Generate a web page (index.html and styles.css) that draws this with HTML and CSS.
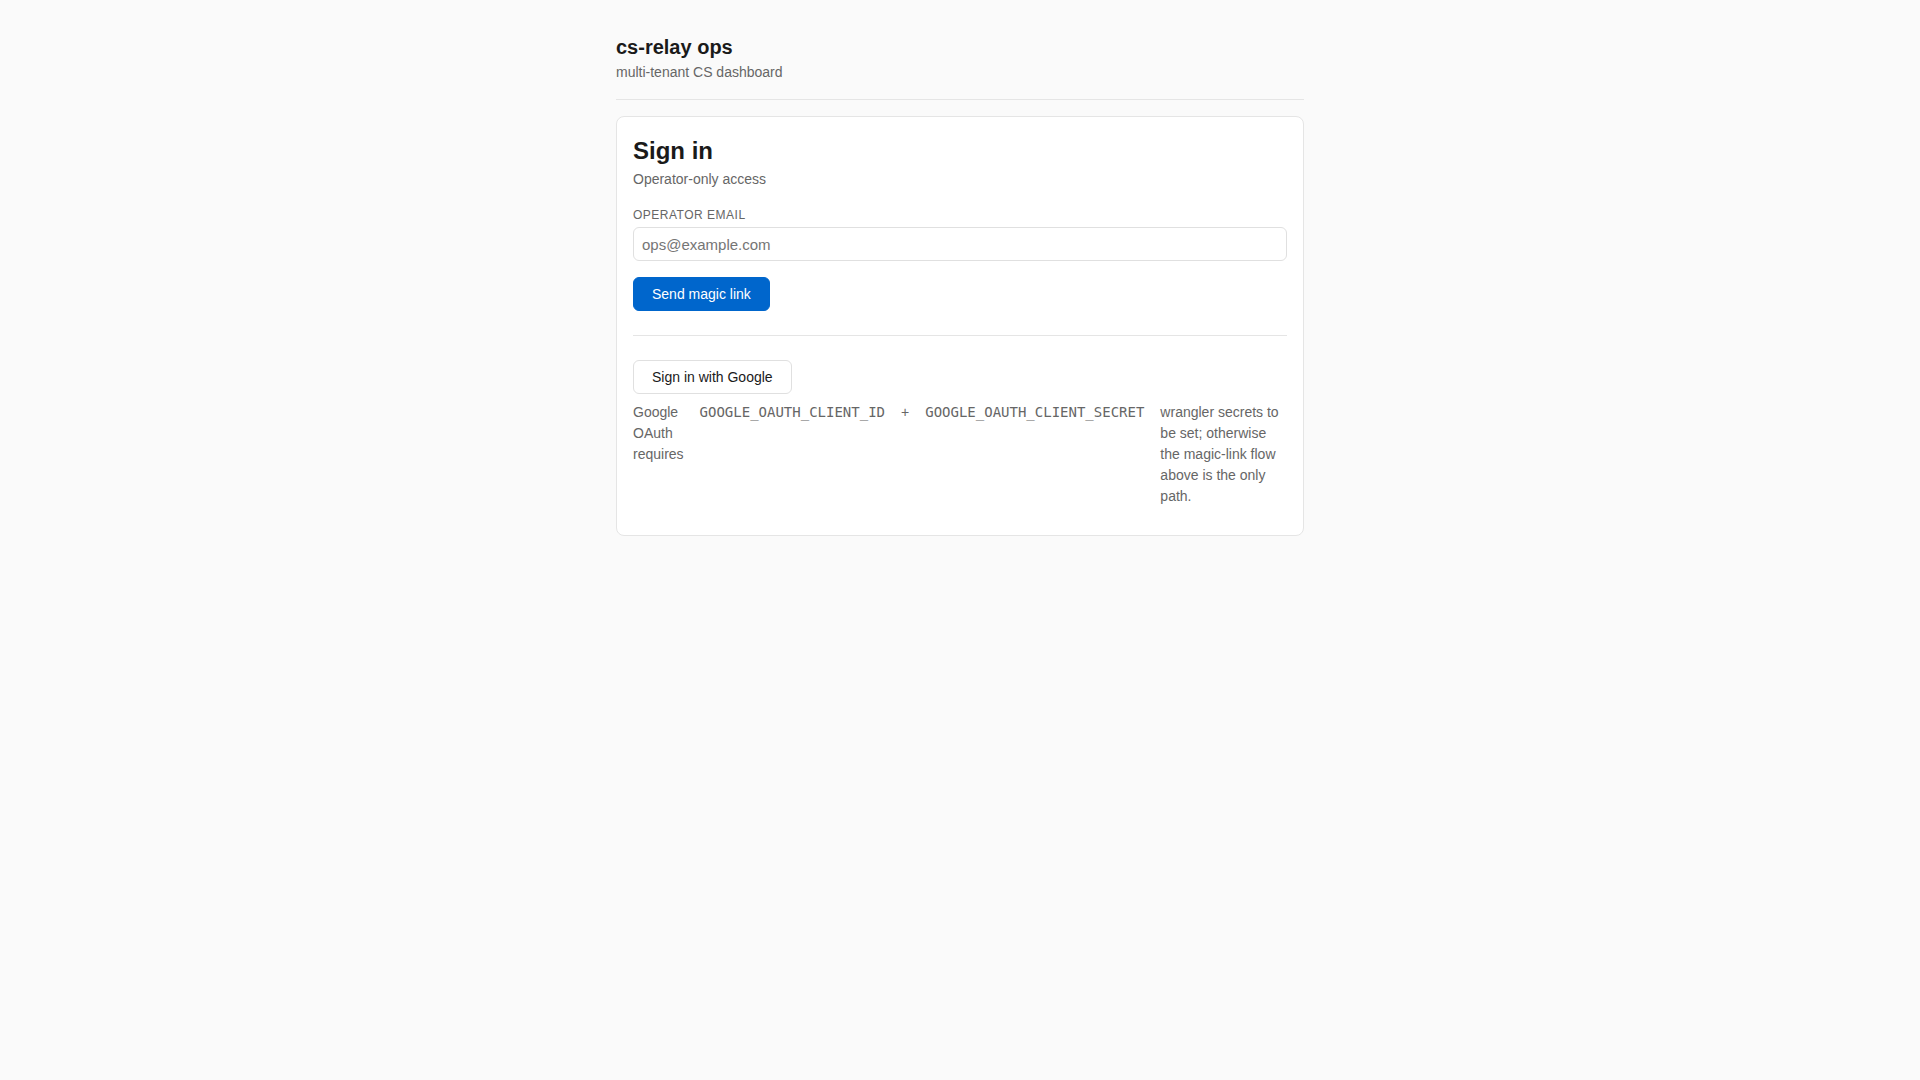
FILE: index.html
```html
<!DOCTYPE html>
<html lang="en">
<head>
<meta charset="utf-8">
<title>cs-relay ops</title>
<link rel="stylesheet" href="styles.css">
</head>
<body>
<div class="page">
  <header class="site-header">
    <h1 class="site-title">cs-relay ops</h1>
    <p class="site-sub">multi-tenant CS dashboard</p>
  </header>
  <main class="card">
    <h2 class="card-title">Sign in</h2>
    <p class="card-sub">Operator-only access</p>
    <form class="form" onsubmit="return false">
      <label class="label" for="email">Operator email</label>
      <input class="input" id="email" type="email" placeholder="ops@example.com">
      <div class="actions">
        <button class="btn btn-primary" type="submit">Send magic link</button>
      </div>
    </form>
    <hr class="divider">
    <div class="actions">
      <button class="btn btn-secondary" type="button">Sign in with Google</button>
    </div>
    <p class="note">Google OAuth requires <code>GOOGLE_OAUTH_CLIENT_ID</code> + <code>GOOGLE_OAUTH_CLIENT_SECRET</code> wrangler secrets to be set; otherwise the magic-link flow above is the only path.</p>
  </main>
</div>
</body>
</html>
```
FILE: styles.css
```css
* { box-sizing: border-box; }
html, body { margin: 0; padding: 0; }
body {
  background: #fafafa;
  color: #1a1a1a;
  font-family: "Liberation Sans", Arial, sans-serif;
  font-size: 14px;
  line-height: 1.5;
}
.page {
  max-width: 720px;
  margin: 0 auto;
  padding: 32px 16px;
}
.site-header {
  padding-bottom: 16px;
  border-bottom: 1px solid #e5e5e5;
  margin-bottom: 16px;
}
.site-title {
  margin: 0;
  font-size: 20px;
  font-weight: 700;
  line-height: 30px;
  color: #1a1a1a;
}
.site-sub {
  margin: 0;
  font-size: 14px;
  line-height: 21px;
  color: #666;
}
.card {
  background: #fff;
  border: 1px solid #e5e5e5;
  border-radius: 8px;
  padding: 16px;
}
.card-title {
  margin: 0;
  font-size: 24px;
  font-weight: 700;
  line-height: 36px;
  color: #1a1a1a;
}
.card-sub {
  margin: 2px 0 0;
  line-height: normal;
  color: #666;
}
.form {
  display: flex;
  flex-direction: column;
  margin-top: 21px;
}
.label {
  font-size: 12px;
  line-height: normal;
  text-transform: uppercase;
  letter-spacing: 0.5px;
  color: #666;
  margin-bottom: 5px;
}
.input {
  display: block;
  width: 100%;
  height: 34px;
  padding: 0 8px;
  border: 1px solid #e0e0e0;
  border-radius: 6px;
  font-family: "Liberation Sans", Arial, sans-serif;
  font-size: 15px;
  color: #1a1a1a;
  background: #fff;
}
.input::placeholder { color: #757575; }
.actions {
  display: flex;
  margin-top: 16px;
}
.divider + .actions { margin-top: 0; }
.btn {
  font-family: "Liberation Sans", Arial, sans-serif;
  font-size: 14px;
  line-height: 16px;
  padding: 8px 18px;
  border-radius: 6px;
  cursor: pointer;
}
.btn-primary {
  background: #0066cc;
  border: 1px solid #0066cc;
  color: #fff;
}
.btn-secondary {
  background: #fff;
  border: 1px solid #e0e0e0;
  color: #1a1a1a;
}
.divider {
  border: 0;
  border-top: 1px solid #e5e5e5;
  margin: 24px 0;
}
.note {
  display: flex;
  gap: 16px;
  margin: 8px 0 12px;
  color: #666;
  line-height: 21px;
}
.note code {
  font-family: "DejaVu Sans Mono", monospace;
  font-size: 14px;
  color: #666;
}
```
